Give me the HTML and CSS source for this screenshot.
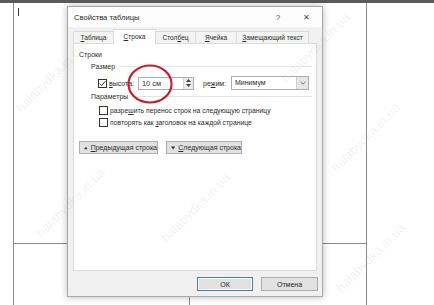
FILE: index.html
```html
<!DOCTYPE html>
<html lang="ru">
<head>
  <meta charset="UTF-8" />
  <title>Свойства таблицы</title>
  <link rel="stylesheet" href="styles.css">
</head>
<body>
  <div class="topbar"></div>

  <div class="sheet">
    <div class="cell cell-top"><span class="caret"></span></div>
    <div class="cell cell-left"></div>
    <div class="cell cell-right"></div>
  </div>

  <div class="dialog">
    <div class="titlebar">
      <span class="title">Свойства таблицы</span>
      <span class="help">?</span>
      <span class="close">✕</span>
    </div>

    <div class="tabs">
      <div class="tab t1"><u>Т</u>аблица</div>
      <div class="tab t2 active"><u>С</u>трока</div>
      <div class="tab t3">Стол<u>б</u>ец</div>
      <div class="tab t4"><u>Я</u>чейка</div>
      <div class="tab t5"><u>З</u>амещающий текст</div>
    </div>

    <div class="panel">
      <div class="section">Строки</div>
      <div class="group">Размер</div>

      <div class="size-row">
        <span class="check checked">
          <svg width="7" height="7" viewBox="0 0 7 7"><path d="M0.8 3.6 L2.7 5.5 L6.3 1.2" fill="none" stroke="#333" stroke-width="1"/></svg>
        </span>
        <span class="lbl"><u>в</u>ысота:</span>
        <div class="spin">
          <span class="spin-val">10 см</span>
          <div class="spin-btns">
            <span class="sb"><svg width="5" height="3" viewBox="0 0 5 3"><path d="M0 3 L2.5 0 L5 3 Z" fill="#444"/></svg></span>
            <span class="sb"><svg width="5" height="3" viewBox="0 0 5 3"><path d="M0 0 L2.5 3 L5 0 Z" fill="#444"/></svg></span>
          </div>
        </div>
        <span class="lbl mode">ре<u>ж</u>им:</span>
        <div class="select">
          <span class="select-val">Минимум</span>
          <span class="select-btn"><svg width="6" height="4" viewBox="0 0 6 4"><path d="M0.5 0.8 L3 3.2 L5.5 0.8" fill="none" stroke="#666" stroke-width="0.9"/></svg></span>
        </div>
        <svg class="mark" width="48" height="42" viewBox="0 0 48 42"><ellipse cx="24" cy="21" rx="21.5" ry="18.5" fill="none" stroke="#c3222a" stroke-width="2.2"/></svg>
      </div>

      <div class="group">Параметры</div>
      <div class="opt"><span class="check"></span><span>разре<u>ш</u>ить перенос строк на следующую страницу</span></div>
      <div class="opt"><span class="check"></span><span>повторять как <u>з</u>аголовок на каждой странице</span></div>

      <div class="nav">
        <button class="btn nav-prev"><svg width="6" height="4" viewBox="0 0 6 4"><path d="M0 4 L3 0 L6 4 Z" fill="#333"/></svg><span><u>П</u>редыдущая строка</span></button>
        <button class="btn nav-next"><svg width="6" height="4" viewBox="0 0 6 4"><path d="M0 0 L3 4 L6 0 Z" fill="#333"/></svg><span><u>С</u>ледующая строка</span></button>
      </div>
    </div>

    <div class="footer">
      <button class="btn ok">ОК</button>
      <button class="btn cancel">Отмена</button>
    </div>
  </div>

  <div class="wm w1">halabydka.in.ua</div>
  <div class="wm w2">halabydka.in.ua</div>
  <div class="wm w3">halabydka.in.ua</div>
  <div class="wm w4">halabydka.in.ua</div>
  <div class="wm w5">halabydka.in.ua</div>
  <div class="wm w6">halabydka.in.ua</div>
</body>
</html>
```

FILE: styles.css
```css
body {
  margin: 0;
  width: 434px;
  height: 305px;
  overflow: hidden;
  background: #fff;
  font-family: "Liberation Sans", Arial, sans-serif;
  font-size: 7px;
  color: #2b2b2b;
  position: relative;
}
u {
  text-decoration-thickness: 0.6px;
  text-underline-offset: 1px;
}
.topbar {
  height: 3px;
  background: #5b5b5b;
}
.sheet {
  margin-left: 13px;
  width: 352px;
  height: 302px;
  border-left: 1px solid #8a8a8a;
  border-right: 1px solid #8a8a8a;
  display: grid;
  grid-template-columns: 176px 1fr;
  grid-template-rows: 241px 1fr;
}
.cell-top {
  grid-column: 1 / 3;
  border-bottom: 1px solid #8a8a8a;
  padding: 5px 0 0 4px;
}
.cell-left {
  border-right: 1px solid #8a8a8a;
}
.caret {
  display: block;
  width: 1px;
  height: 8px;
  background: #333;
}

/* dialog window */
.dialog {
  position: absolute;
  left: 67px;
  top: 6px;
  width: 254px;
  height: 289px;
  border: 1px solid #a9a9a9;
  background: #f0f0f0;
  box-shadow: 0 0 7px rgba(0,0,0,0.28);
  display: flex;
  flex-direction: column;
  white-space: nowrap;
}
.titlebar {
  height: 20px;
  background: #fcfcfc;
  display: flex;
  align-items: center;
  padding-left: 6px;
  font-size: 7.6px;
}
.title {
  flex: 1;
  padding-top: 1px;
}
.help {
  width: 10px;
  margin-right: 18px;
  color: #444;
  font-size: 8px;
  text-align: center;
}
.close {
  width: 10px;
  margin-right: 11px;
  color: #444;
  font-size: 8px;
  text-align: center;
}
.tabs {
  display: flex;
  padding: 2px 0 0 5px;
  height: 14px;
  align-items: flex-end;
  position: relative;
  z-index: 1;
}
.tab {
  height: 12px;
  border: 1px solid #dadada;
  border-bottom: none;
  box-sizing: border-box;
  text-align: center;
  line-height: 11px;
  background: #f3f3f3;
  margin-right: -1px;
  font-size: 6.6px;
}
.tab.active {
  height: 15px;
  background: #fff;
  line-height: 14px;
  margin-bottom: -1px;
}
.t1 { width: 41px; }
.t2 { width: 43px; }
.t3 { width: 41px; }
.t4 { width: 42px; }
.t5 { width: 73px; }

.panel {
  margin-left: 5px;
  width: 233px;
  height: 221px;
  background: #fff;
  border: 1px solid #dadada;
  padding: 5px 4px 0 5px;
  display: flex;
  flex-direction: column;
}
.section {
  line-height: 11px;
}
.group {
  display: flex;
  align-items: center;
  margin-left: 12px;
  line-height: 11px;
  margin-top: 1px;
}
.group::after {
  content: "";
  flex: 1;
  border-top: 1px solid #e4e4e4;
  margin-left: 4px;
}
.size-row {
  display: flex;
  align-items: center;
  margin: 4px 0 0 19px;
  height: 14px;
  position: relative;
}
.check {
  width: 9px;
  height: 9px;
  border: 1px solid #333;
  box-sizing: border-box;
  background: #fff;
  display: flex;
  align-items: center;
  justify-content: center;
  flex: none;
}
.lbl {
  margin-left: 2px;
  width: 29px;
}
.spin {
  display: flex;
  width: 56px;
  height: 13px;
  border: 1px solid #abadb3;
  box-sizing: border-box;
}
.spin-val {
  flex: 1;
  padding-left: 3px;
  line-height: 11px;
  font-size: 7.4px;
}
.spin-btns {
  width: 9px;
  display: flex;
  flex-direction: column;
  border-left: 1px solid #d4d4d4;
}
.sb {
  flex: 1;
  display: flex;
  align-items: center;
  justify-content: center;
  background: #ececec;
}
.mode {
  margin-left: 9px;
  width: 28px;
}
.select {
  display: flex;
  width: 78px;
  height: 14px;
  border: 1px solid #abadb3;
  box-sizing: border-box;
}
.select-val {
  flex: 1;
  padding-left: 3px;
  line-height: 12px;
}
.select-btn {
  width: 11px;
  background: #e6e6e6;
  border-left: 1px solid #cfcfcf;
  display: flex;
  align-items: center;
  justify-content: center;
}
.mark {
  position: absolute;
  left: 28px;
  top: -13px;
}
.opt {
  display: flex;
  align-items: center;
  margin: 2px 0 0 20px;
  height: 10px;
  gap: 2px;
  font-size: 6.8px;
}
.group + .opt {
  margin-top: 3px;
}
.nav {
  display: flex;
  gap: 8px;
  margin-top: 14px;
}
.btn {
  font-family: inherit;
  font-size: 7px;
  color: #2b2b2b;
  background: #e1e1e1;
  border: 1px solid #adadad;
  height: 13px;
  padding: 0;
  display: flex;
  align-items: center;
  white-space: nowrap;
}
.nav-prev {
  width: 79px;
  padding-left: 4px;
  gap: 3px;
}
.nav-next {
  width: 76px;
  padding-left: 4px;
  gap: 3px;
}
.footer {
  display: flex;
  justify-content: flex-end;
  gap: 8px;
  padding: 6px 4px 0 0;
}
.footer .btn {
  height: 14px;
  justify-content: center;
}
.ok {
  width: 56px;
  border: 1px solid #3c7fb1;
  box-shadow: inset 0 0 0 1px #fff;
}
.cancel {
  width: 57px;
}

/* watermark */
.wm {
  position: absolute;
  font-family: "Liberation Sans", sans-serif;
  font-size: 13px;
  color: rgba(170,170,170,0.16);
  transform: rotate(-45deg);
  white-space: nowrap;
  pointer-events: none;
}
.w1 { left: 5px; top: 70px; }
.w2 { left: 270px; top: 40px; }
.w3 { left: 25px; top: 195px; }
.w4 { left: 150px; top: 200px; }
.w5 { left: 320px; top: 130px; }
.w6 { left: 325px; top: 250px; }
```
